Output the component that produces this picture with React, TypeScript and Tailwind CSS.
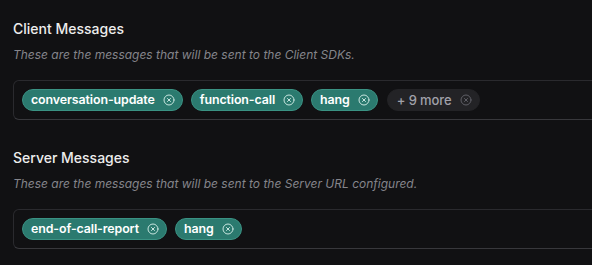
import { XCircle } from 'lucide-react'

interface ChipProps {
  label: string
  muted?: boolean
}

function Chip({ label, muted }: ChipProps) {
  return (
    <span
      className={`flex items-center h-[22px] pr-[7px] gap-[8px] rounded-full border tracking-[-0.1px] ${
        muted
          ? 'bg-[#232326] border-[#232326] text-[#a1a1aa] font-medium text-[13px] pl-[9px] ml-[1px]'
          : 'bg-[#2b7a6f] border-[#3a9283] text-white font-semibold text-[12.4px] pl-[8px]'
      }`}
    >
      <span className="leading-none">{label}</span>
      <XCircle
        size={12}
        strokeWidth={2}
        className={muted ? 'text-[#5f5f66]' : 'text-[#c9e6e0]'}
      />
    </span>
  )
}

interface SectionProps {
  title: string
  description: string
  chips: string[]
  more?: number
}

function Section({ title, description, chips, more }: SectionProps) {
  return (
    <div>
      <h3 className="text-[14px] leading-[20px] font-medium text-[#ededed]">{title}</h3>
      <p className="mt-[8px] text-[12px] leading-[16px] italic text-[#85858b]">{description}</p>
      <div className="mt-[17px] -mr-[40px] flex items-center gap-[8px] rounded-[6px] border border-[#2a2a2e] border-b-[#38383c] px-[8px] py-[8px]">
        {chips.map(chip => (
          <Chip key={chip} label={chip} />
        ))}
        {more && <Chip label={`+ ${more} more`} muted />}
      </div>
    </div>
  )
}

export default function App() {
  return (
    <div
      className="w-[592px] h-[265px] overflow-hidden bg-[#111113] pl-[13px] pt-[19px]"
      style={{ fontFamily: 'Inter, "Noto Sans", sans-serif' }}
    >
      <div className="flex flex-col gap-[28px]">
        <Section
          title="Client Messages"
          description="These are the messages that will be sent to the Client SDKs."
          chips={['conversation-update', 'function-call', 'hang']}
          more={9}
        />
        <Section
          title="Server Messages"
          description="These are the messages that will be sent to the Server URL configured."
          chips={['end-of-call-report', 'hang']}
        />
      </div>
    </div>
  )
}
